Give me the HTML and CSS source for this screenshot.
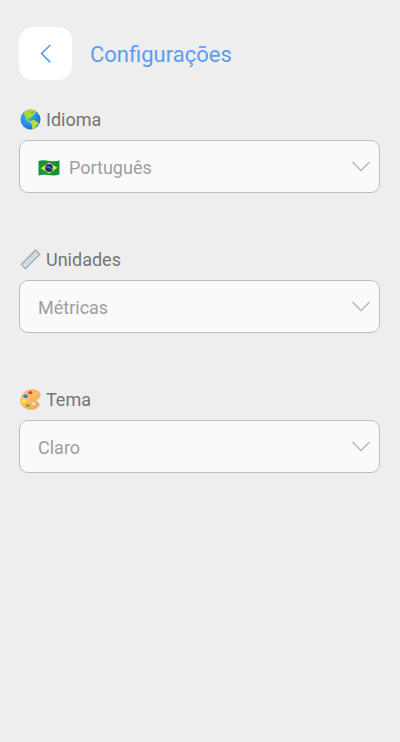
FILE: index.html
```html
<!DOCTYPE html>
<html lang="pt-BR">
<head>
<meta charset="utf-8">
<meta name="viewport" content="width=device-width, initial-scale=1">
<title>Configurações</title>
<link rel="stylesheet" href="styles.css">
</head>
<body>
<header class="header">
  <button class="back" type="button" aria-label="Voltar">
    <svg width="12" height="20" viewBox="0 0 12 20" fill="none" stroke="currentColor" stroke-width="1.7"><path d="M10.300 1 1.600 9.500l8.700 8.800"/></svg>
  </button>
  <h1 class="title">Configurações</h1>
</header>
<main class="settings">
  <div class="field">
    <label class="label" for="idioma">
      <svg class="emoji" viewBox="0 0 22 22" aria-hidden="true">
        <defs><radialGradient id="sea" cx=".35" cy=".35" r=".75"><stop offset="0" stop-color="#39b4f4"/><stop offset=".6" stop-color="#258ae0"/><stop offset="1" stop-color="#176bc4"/></radialGradient></defs>
        <circle cx="10.500" cy="11.500" r="10" fill="url(#sea)"/>
        <path d="M4.200 4.400C6 2.500 8.300 1.600 11 1.600l3.400.8 1.800 1.500-.5 1.700-1.700 1.100-1.500 1.700-1.700.9-.6 1.300-1.600-.4-1.100.8.7 1.400 1.500-.2.5 1.300 1.300.6-.5.900-2-.6-2-1.600L5.800 10 5.300 7.700 4 6.300Z" fill="#a6dc2c"/>
        <path d="m11.300 12.400 2.200-.7 2.200 1 1.200 1.300 1.700.7-.3 1.900-1.600 1-1 1.900-1.600 1-1.300 1-.6-.5-.1-2.800-.8-2.100-1-1.600Z" fill="#b4dc3c"/>
        <path d="m11 4.300 1.800-.8 1 .8-1.200 1.400Z" fill="#6fae3b"/>
        <path d="m16.800 4.700 1 .2 1.100 2-1 .2Z" fill="#8fc33b"/>
      </svg>
      <span>Idioma</span>
    </label>
    <div class="control">
      <svg class="flag" width="22" height="18" viewBox="0 0 22 18" aria-hidden="true">
        <path d="M.5 2C4 .8 7.500 1.300 11 1.900s7 .7 10.500-.3v14c-3.500 1.200-7 1.100-10.500.5s-7-.7-10.500.4Z" fill="#109638"/>
        <path d="M2.700 9.200 11 3.500l8.300 5.300-8.300 5.700Z" fill="#ffe12e"/>
        <circle cx="11" cy="9" r="3.900" fill="#18308b"/>
        <path d="M7.600 8c2.500-.4 4.900.4 6.700 2.200" fill="none" stroke="#9daed6" stroke-width=".7"/>
      </svg>
      <select class="select with-flag" id="idioma"><option>Português</option><option>English</option><option>Español</option></select>
      <svg class="chevron" width="20" height="12" viewBox="0 0 20 12" aria-hidden="true"><path d="m1.500 1 8.500 8.500L18.500 1"/></svg>
    </div>
  </div>
  <div class="field">
    <label class="label" for="unidades">
      <svg class="emoji" viewBox="0 0 22 22" aria-hidden="true">
        <path d="M1.200 16.300 15.500 2l4.300 4.200L5.500 20.600Z" fill="#d3dce1" stroke="#93a6b1" stroke-width="1.100"/>
        <path d="m3.800 14.300 1.300 1.300m.8-3.400.8.800m1.300-2.900 1.300 1.300m.8-3.400.8.800m1.300-2.900 1.300 1.300m.8-3.400.8.800" fill="none" stroke="#9aabb5" stroke-width=".7"/>
        <circle cx="5" cy="17.200" r=".7" fill="#f4f4f4"/>
      </svg>
      <span>Unidades</span>
    </label>
    <div class="control">
      <select class="select" id="unidades"><option>Métricas</option><option>Imperiais</option></select>
      <svg class="chevron" width="20" height="12" viewBox="0 0 20 12" aria-hidden="true"><path d="m1.500 1 8.500 8.500L18.500 1"/></svg>
    </div>
  </div>
  <div class="field">
    <label class="label" for="tema">
      <svg class="emoji" viewBox="0 0 22 22" aria-hidden="true">
        <defs><linearGradient id="wood" x1="0" y1="0" x2="1" y2="1"><stop offset="0" stop-color="#ffcc80"/><stop offset="1" stop-color="#f5a64c"/></linearGradient></defs>
        <path d="M11.500 1.600c4.600-.4 8.300 1.800 8.600 5.200.2 2.300-.9 3.800-2.700 4.500-1.600.6-1.700 1.500-.5 2.200 2 1 3 2.400 2 4.200-1.600 2.800-6 4.200-10.200 3.400C3.800 20.200.5 17 .6 12.600.7 6.900 5.200 2.200 11.500 1.600Z" fill="url(#wood)" stroke="#e89b45" stroke-width=".5"/>
        <ellipse cx="13.700" cy="15.600" rx="1.900" ry="1.700" fill="#f0eeec" stroke="#e2a05a" stroke-width=".4"/>
        <ellipse cx="10.300" cy="4.600" rx="2.100" ry="1.700" fill="#e53935"/>
        <ellipse cx="5.500" cy="8.200" rx="2.200" ry="1.900" fill="#1e88e5"/>
        <ellipse cx="4.100" cy="13" rx="2.100" ry="1.900" fill="#ffeb22"/>
        <ellipse cx="7.900" cy="17.500" rx="2.200" ry="1.800" fill="#7cb342"/>
      </svg>
      <span>Tema</span>
    </label>
    <div class="control">
      <select class="select" id="tema"><option>Claro</option><option>Escuro</option></select>
      <svg class="chevron" width="20" height="12" viewBox="0 0 20 12" aria-hidden="true"><path d="m1.500 1 8.500 8.500L18.500 1"/></svg>
    </div>
  </div>
</main>
</body>
</html>
```

FILE: styles.css
```css
* {
  box-sizing: border-box;
}

body {
  margin: 0;
  padding: 27px 20px 20px 19px;
  background: #eeeeee;
  color: #757575;
  font-family: Roboto, "Liberation Sans", sans-serif;
  font-size: 18px;
}

.header {
  display: flex;
  align-items: center;
  gap: 18px;
}

.back {
  display: flex;
  align-items: center;
  justify-content: center;
  width: 53px;
  height: 53px;
  padding: 0;
  border: 0;
  border-radius: 14px;
  background: #ffffff;
  color: #5b9cf4;
  cursor: pointer;
}

.title {
  margin: 0;
  padding-top: 2px;
  color: #5b9cf4;
  font-size: 22px;
  font-weight: 400;
  line-height: 28px;
}

.settings {
  display: flex;
  flex-direction: column;
  gap: 55px;
  margin-top: 28px;
}

.label {
  display: flex;
  align-items: center;
  gap: 4px;
  height: 22px;
  margin-bottom: 10px;
  padding-left: 1px;
}

.emoji {
  width: 22px;
  height: 22px;
}

.control {
  position: relative;
}

.select {
  display: block;
  width: 100%;
  height: 53px;
  padding: 2px 40px 0 18px;
  border: 1px solid #bdbdbd;
  border-radius: 9px;
  appearance: none;
  background: #fafafa;
  color: #9e9e9e;
  font: inherit;
}

.with-flag {
  padding-left: 49px;
}

.flag {
  position: absolute;
  top: 19px;
  left: 19px;
  pointer-events: none;
}

.chevron {
  position: absolute;
  top: 21px;
  right: 9px;
  fill: none;
  stroke: #bdbdbd;
  stroke-width: 1.7;
  pointer-events: none;
}
```
